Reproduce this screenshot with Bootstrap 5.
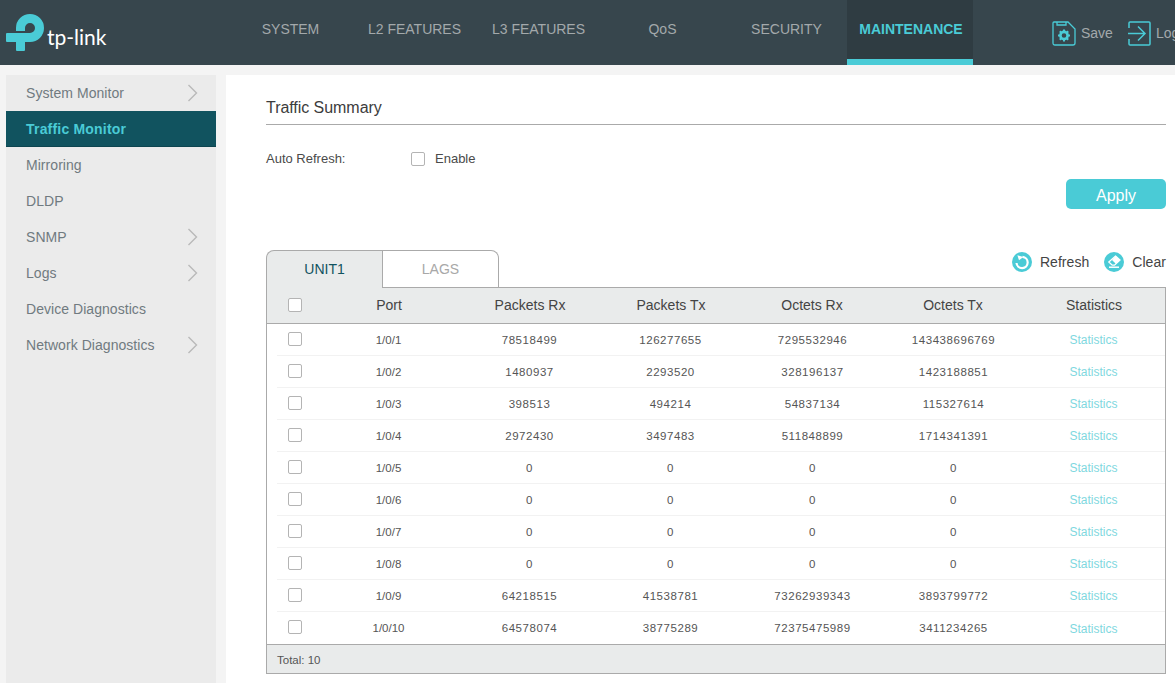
<!DOCTYPE html>
<html lang="en">
<head>
  <meta charset="UTF-8">
  <title>Traffic Summary</title>
  <link href="https://cdn.jsdelivr.net/npm/bootstrap@5.3.0/dist/css/bootstrap.min.css" rel="stylesheet">
  <style>
    html, body { height: 683px; overflow: hidden; }
    body { background: #f4f4f4; font-family: "Liberation Sans", Arial, sans-serif; color: #4a4a4a; }
    .top-bar { height: 65px; background: #37464d; overflow: hidden; }
    .logo-box { width: 228px; padding-left: 6px; flex-shrink: 0; }
    .logo-word { font-family: "Lato", sans-serif; font-size: 21px; color: #fff; margin-left: 3px; line-height: 1; padding-top: 7px; }
    .top-link { width: 124px; flex-shrink: 0; height: 65px; line-height: 59px; padding-left: 1px; text-align: center; color: #a3a9ab; font-size: 14px; text-decoration: none; }
    .top-link.on { width: 126px; margin-left: -1px; padding-left: 2px; background: #2f3c42; color: #4acbd6; font-weight: 700; border-bottom: 6px solid #4acbd6; }
    .top-tool { color: #a3a9ab; font-size: 14px; line-height: 1; flex-shrink: 0; gap: 5px; }
    .tools { margin-left: 79px; gap: 15px; padding-top: 1px; white-space: nowrap; }
    .side-col { width: 210px; margin-left: 6px; margin-top: 10px; height: 608px; background: #ebebeb; }
    .side-item { height: 36px; padding: 0 18px 0 20px; font-size: 14px; color: #707a80; letter-spacing: .05px; }
    .side-item.on { background: #11535f; color: #4acbd6; font-weight: 700; letter-spacing: .2px; border-bottom: 1px solid #0d4550; padding-top: 1px; }
    .main-col { width: 949px; margin-left: 10px; margin-top: 10px; height: 608px; background: #fff; padding: 23px 9px 0 40px; }
    .page-title { font-size: 16px; color: #3c3c3c; line-height: 20px; padding-bottom: 6px; border-bottom: 1px solid #aaa; letter-spacing: -.05px; }
    .form-line { margin-top: 24px; font-size: 13px; height: 20px; }
    .form-label-txt { width: 145px; }
    .enable-txt { margin-left: 10px; }
    .tick { width: 14px; height: 14px; border: 1px solid #b4b4b4; border-radius: 2px; background: #fff; display: block; }
    .apply-btn { width: 100px; height: 30px; padding: 3px 0 0; background: #4acbd6; border: 0; border-radius: 5px; color: #fff; font-size: 16px; margin-top: 10px; }
    .tab-line { margin-top: 41px; height: 38px; }
    .tab-one { width: 117px; height: 38px; border: 1px solid #aaa; font-size: 14px; }
    .tab-one.on { background: #e9ebeb; color: #11535f; border-bottom: 0; border-radius: 8px 0 0 0; }
    .tab-one.off { width: 116px; background: #fff; color: #a8a8a8; border-left: 0; border-radius: 0 8px 0 0; }
    .act-txt { font-size: 14px; color: #444; gap: 8px; letter-spacing: .05px; }
    .act-txt svg { margin-top: -1px; }
    .act-wrap { padding-top: 2px; gap: 15px; }
    .grid-box { border: 1px solid #aaa; border-top: 0; margin-top: -1px; }
    .data-grid { table-layout: fixed; width: 100%; border-collapse: collapse; }
    .data-grid th { height: 36px; background: #e9ebeb; font-weight: 400; font-size: 14px; color: #444; text-align: center; border-top: 1px solid #aaa; border-bottom: 1px solid #aaa; vertical-align: middle; padding-right: 2px; }
    .data-grid td { height: 32px; font-size: 11.5px; color: #555; text-align: center; vertical-align: middle; border-bottom: 1px solid #f2f2f2; padding: 2px 2px 0 0; }
    .data-grid td:first-child { border-bottom: 0; background: linear-gradient(#f2f2f2, #f2f2f2) 10px 100% / 100% 1px no-repeat; padding: 0; }
    .data-grid th:first-child { padding: 0; }
    .data-grid td:nth-child(n+3):nth-child(-n+6) { letter-spacing: .55px; }
    .data-grid td:nth-child(n+5):nth-child(-n+6) { padding-right: 0; }
    .data-grid tr:last-child td { border-bottom: 0; background: none; }
    .data-grid .tick { margin: -2px 0 0 21px; }
    .stat-link { color: #7fd8e0; text-decoration: none; font-size: 12px; }
    .grid-foot { height: 29px; line-height: 30px; background: #e9ebeb; border-top: 1px solid #aaa; font-size: 11.5px; padding-left: 10px; color: #555; }
  </style>
</head>
<body>
  <!-- top menu -->
  <div class="top-bar d-flex">
    <div class="logo-box d-flex align-items-center">
      <svg width="38" height="38" viewBox="0 0 38 38" fill="none">
        <path d="M14.5 17 V14 A9.5 9.5 0 0 1 24 4.5 A9.5 9.5 0 0 1 24 23.5 H19" stroke="#4acbd6" stroke-width="9"/>
        <path d="M1 19 H19 V36 Q19 37 18 37 H11 Q10 37 10 36 V28 H1 Q0 28 0 27 V20 Q0 19 1 19 Z" fill="#4acbd6"/>
      </svg>
      <span class="logo-word">tp-link</span>
    </div>
    <a class="top-link" href="#">SYSTEM</a>
    <a class="top-link" href="#">L2 FEATURES</a>
    <a class="top-link" href="#">L3 FEATURES</a>
    <a class="top-link" href="#">QoS</a>
    <a class="top-link" href="#">SECURITY</a>
    <a class="top-link on" href="#">MAINTENANCE</a>
    <div class="tools d-flex align-items-center">
      <div class="d-flex align-items-center top-tool">
        <svg width="24" height="25" viewBox="0 0 24 25" fill="none" stroke="#4acbd6" stroke-width="1.3">
          <path d="M2 1 H16 L23 8 V22 Q23 24 21 24 H3 Q1 24 1 22 V2 Q1 1 2 1 Z"/>
          <path d="M5 1 V4 H14 V1"/>
          <circle cx="12" cy="14.5" r="3.6" stroke-width="2.6"/>
          <path d="M12 8.5 V10.5 M12 18.5 V20.5 M6 14.5 H8 M16 14.5 H18 M7.8 10.3 L9.2 11.7 M14.8 17.3 L16.2 18.7 M7.8 18.7 L9.2 17.3 M14.8 11.7 L16.2 10.3" stroke-width="2"/>
        </svg>
        <span>Save</span>
      </div>
      <div class="d-flex align-items-center top-tool">
        <svg width="23" height="25" viewBox="0 0 23 25" fill="none" stroke="#4acbd6" stroke-width="1.5">
          <path d="M1 7 V2 Q1 1 2 1 H21 Q22 1 22 2 V23 Q22 24 21 24 H2 Q1 24 1 23 V18"/>
          <path d="M0 12.5 H16 M10 5.5 L17 12.5 L10 19.5"/>
        </svg>
        <span>Logout</span>
      </div>
    </div>
  </div>

  <div class="d-flex">
    <!-- left menu -->
    <div class="side-col flex-shrink-0">
      <div class="side-item d-flex align-items-center justify-content-between">System Monitor
        <svg width="11" height="18" viewBox="0 0 11 18" fill="none" stroke="#b9b9b9" stroke-width="1.4"><path d="M1.5 1 L9.5 9 L1.5 17"/></svg>
      </div>
      <div class="side-item on d-flex align-items-center">Traffic Monitor</div>
      <div class="side-item d-flex align-items-center">Mirroring</div>
      <div class="side-item d-flex align-items-center">DLDP</div>
      <div class="side-item d-flex align-items-center justify-content-between">SNMP
        <svg width="11" height="18" viewBox="0 0 11 18" fill="none" stroke="#b9b9b9" stroke-width="1.4"><path d="M1.5 1 L9.5 9 L1.5 17"/></svg>
      </div>
      <div class="side-item d-flex align-items-center justify-content-between">Logs
        <svg width="11" height="18" viewBox="0 0 11 18" fill="none" stroke="#b9b9b9" stroke-width="1.4"><path d="M1.5 1 L9.5 9 L1.5 17"/></svg>
      </div>
      <div class="side-item d-flex align-items-center">Device Diagnostics</div>
      <div class="side-item d-flex align-items-center justify-content-between">Network Diagnostics
        <svg width="11" height="18" viewBox="0 0 11 18" fill="none" stroke="#b9b9b9" stroke-width="1.4"><path d="M1.5 1 L9.5 9 L1.5 17"/></svg>
      </div>
    </div>

    <!-- content -->
    <div class="main-col flex-shrink-0">
      <div class="page-title">Traffic Summary</div>
      <div class="form-line d-flex align-items-center">
        <span class="form-label-txt">Auto Refresh:</span>
        <span class="tick"></span>
        <span class="enable-txt">Enable</span>
      </div>
      <div class="d-flex justify-content-end">
        <button class="btn apply-btn" type="button">Apply</button>
      </div>

      <div class="tab-line d-flex justify-content-between">
        <div class="d-flex">
          <div class="tab-one on d-flex align-items-center justify-content-center">UNIT1</div>
          <div class="tab-one off d-flex align-items-center justify-content-center">LAGS</div>
        </div>
        <div class="act-wrap d-flex align-items-start">
          <div class="act-txt d-flex align-items-center">
            <svg width="20" height="20" viewBox="0 0 20 20"><circle cx="10" cy="10" r="10" fill="#4acbd6"/><path d="M10.5 4.9 A5.6 5.6 0 1 1 4.5 11" fill="none" stroke="#fff" stroke-width="2.2"/><path d="M5.4 3.2 L11.4 4.9 L7 8.2 Z" fill="#fff"/></svg>
            <span>Refresh</span>
          </div>
          <div class="act-txt d-flex align-items-center">
            <svg width="20" height="20" viewBox="0 0 20 20"><circle cx="10" cy="10" r="10" fill="#4acbd6"/><path d="M11.5 4 L16 8 L10.5 13.2 H8.2 L4.8 10 Z" fill="none" stroke="#fff" stroke-width="1.3"/><path d="M11.5 4 L16 8 L11.8 11.8 L8 8 Z" fill="#fff"/><path d="M5 15.2 H15" stroke="#fff" stroke-width="1.5"/></svg>
            <span>Clear</span>
          </div>
        </div>
      </div>

      <div class="grid-box">
        <table class="data-grid">
          <colgroup>
            <col style="width:52px"><col><col><col><col><col><col>
          </colgroup>
          <thead>
            <tr><th><span class="tick"></span></th><th>Port</th><th>Packets Rx</th><th>Packets Tx</th><th>Octets Rx</th><th>Octets Tx</th><th>Statistics</th></tr>
          </thead>
          <tbody id="portRows"></tbody>
        </table>
        <div class="grid-foot">Total: 10</div>
      </div>
    </div>
  </div>

  <script>
    const ports = [
      ["1/0/1", 78518499, 126277655, 7295532946, 143438696769],
      ["1/0/2", 1480937, 2293520, 328196137, 1423188851],
      ["1/0/3", 398513, 494214, 54837134, 115327614],
      ["1/0/4", 2972430, 3497483, 511848899, 1714341391],
      ["1/0/5", 0, 0, 0, 0],
      ["1/0/6", 0, 0, 0, 0],
      ["1/0/7", 0, 0, 0, 0],
      ["1/0/8", 0, 0, 0, 0],
      ["1/0/9", 64218515, 41538781, 73262939343, 3893799772],
      ["1/0/10", 64578074, 38775289, 72375475989, 3411234265]
    ];
    document.getElementById("portRows").innerHTML = ports.map(p => `
      <tr>
        <td><span class="tick"></span></td>
        ${p.map(v => `<td>${v}</td>`).join("")}
        <td><a class="stat-link" href="#">Statistics</a></td>
      </tr>`).join("");
  </script>
  <script src="https://cdn.jsdelivr.net/npm/bootstrap@5.3.0/dist/js/bootstrap.bundle.min.js"></script>
</body>
</html>
